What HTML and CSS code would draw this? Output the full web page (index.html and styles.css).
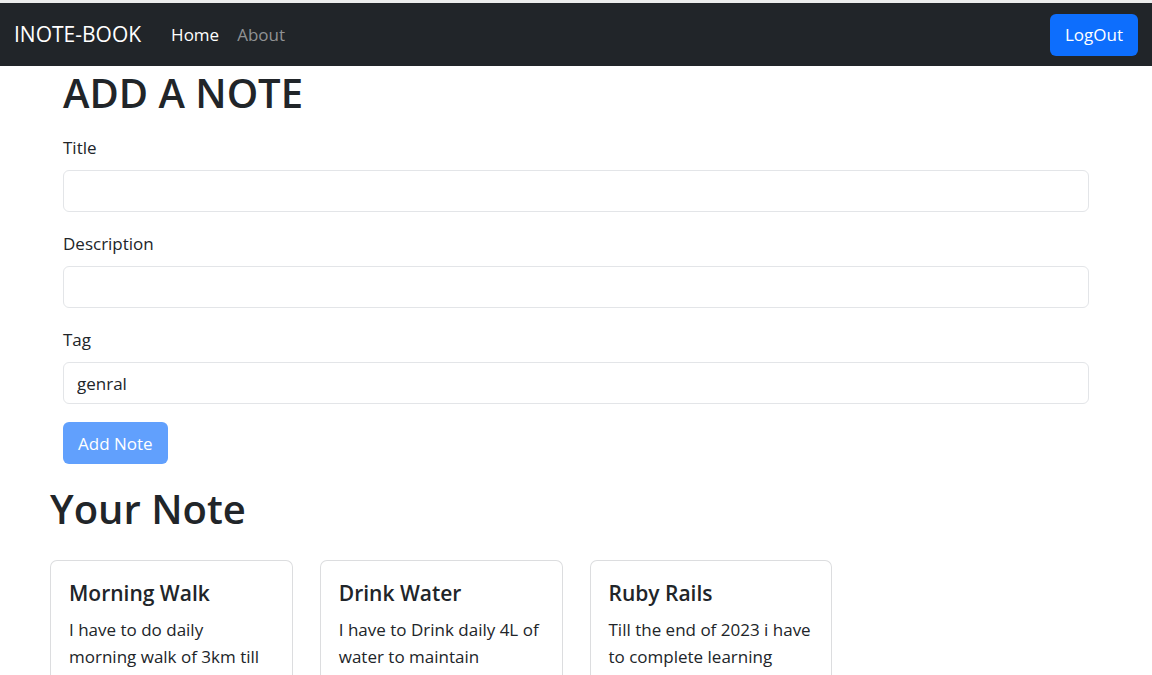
FILE: index.html
```html
<!DOCTYPE html>
<html lang="en">
<head>
<meta charset="utf-8">
<meta name="viewport" content="width=device-width, initial-scale=1">
<title>INOTE-BOOK</title>
<link rel="stylesheet" href="styles.css">
</head>
<body>
<header class="navbar">
  <a class="brand" href="#">INOTE-BOOK</a>
  <nav class="nav-links">
    <a class="nav-link active" href="#">Home</a>
    <a class="nav-link" href="#">About</a>
  </nav>
  <button class="btn" type="button">LogOut</button>
</header>
<main class="container">
  <form class="note-form">
    <h1 class="heading">ADD A NOTE</h1>
    <div class="field">
      <label class="label" for="title">Title</label>
      <input class="input" id="title" type="text">
    </div>
    <div class="field">
      <label class="label" for="description">Description</label>
      <input class="input" id="description" type="text">
    </div>
    <div class="field">
      <label class="label" for="tag">Tag</label>
      <input class="input" id="tag" type="text" value="genral">
    </div>
    <button class="btn" type="submit" disabled>Add Note</button>
  </form>
  <section class="notes">
    <h1 class="heading">Your Note</h1>
    <div class="note-grid">
      <article class="card">
        <h2 class="card-title">Morning Walk</h2>
        <p class="card-text">I have to do daily morning walk of 3km till</p>
      </article>
      <article class="card">
        <h2 class="card-title">Drink Water</h2>
        <p class="card-text">I have to Drink daily 4L of water to maintain</p>
      </article>
      <article class="card">
        <h2 class="card-title">Ruby Rails</h2>
        <p class="card-text">Till the end of 2023 i have to complete learning</p>
      </article>
    </div>
  </section>
</main>
</body>
</html>
```
FILE: styles.css
```css
* { box-sizing: border-box; }
body {
  margin: 0;
  background: #fff;
  color: #212529;
  font-family: "Segoe UI", "Open Sans", sans-serif;
  font-size: 17px;
  line-height: 27px;
}
.navbar {
  display: flex;
  align-items: center;
  padding: 9px 14px;
  background: #212529;
  border-top: 3px solid #ebecec;
}
.brand {
  margin-right: 18px;
  color: #fff;
  font-size: 21px;
  text-decoration: none;
}
.nav-links { display: flex; flex: 1; padding-left: 3px; }
.nav-link {
  padding: 9px;
  color: #909294;
  text-decoration: none;
}
.nav-link.active { color: #fff; }
.btn {
  height: 42px;
  padding: 0 15px;
  border: 0;
  border-radius: 6px;
  background: #0d6efd;
  color: #fff;
  font: inherit;
}
.btn:disabled { opacity: 0.65; }
.container { padding: 0 50px; }
.note-form { padding: 0 13px; }
.heading {
  margin: 0;
  font-size: 40px;
  font-weight: 600;
  line-height: 54px;
}
.note-form .heading { margin-bottom: 14px; }
.field { margin-bottom: 18px; }
.label {
  display: block;
  margin-bottom: 9px;
}
.input {
  display: block;
  width: 100%;
  height: 42px;
  padding: 0 13px;
  border: 1px solid #e3e5e8;
  border-radius: 6px;
  background: #fff;
  color: inherit;
  font: inherit;
}
.notes { margin-top: 18px; }
.note-grid {
  display: grid;
  grid-template-columns: repeat(4, 1fr);
  gap: 27px;
  margin-top: 24px;
}
.card {
  padding: 19px 18px;
  border: 1px solid #dcdddf;
  border-bottom: 0;
  border-radius: 7px 7px 0 0;
}
.card-title {
  margin: 0 0 9px;
  font-size: 21px;
  font-weight: 600;
  line-height: 27px;
}
.card-text { margin: 0; }
```
